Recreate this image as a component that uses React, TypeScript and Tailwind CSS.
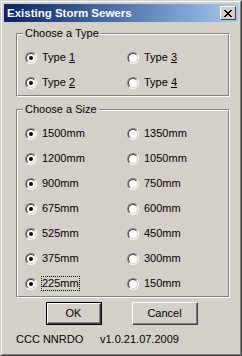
import React from "react";

const FONT = "font-['Liberation_Sans',Arial,sans-serif]";

function Radio({ checked }: { checked: boolean }) {
    return (
        <span className="flex h-[12px] w-[12px] shrink-0 rounded-full border border-t-[#808080] border-l-[#808080] border-r-white border-b-white">
            <span className="flex flex-1 items-center justify-center rounded-full border border-t-[#404040] border-l-[#404040] border-r-[#d4d0c8] border-b-[#d4d0c8] bg-white">
                {checked && <span className="h-[4px] w-[4px] rounded-full bg-black" />}
            </span>
        </span>
    );
}

function Option({
    checked,
    children,
    focused,
}: {
    checked: boolean;
    children: React.ReactNode;
    focused?: boolean;
}) {
    return (
        <div className="flex h-[25px] items-center">
            <Radio checked={checked} />
            <span
                className={
                    focused
                        ? "ml-[4px] border border-dotted border-black px-0 leading-[13px]"
                        : "ml-[5px] leading-[13px]"
                }
            >
                {children}
            </span>
        </div>
    );
}

function GroupBox({
    title,
    children,
    className,
}: {
    title: string;
    children: React.ReactNode;
    className?: string;
}) {
    return (
        <div
            className={`relative w-[214px] border border-t-[#808080] border-l-[#808080] border-r-white border-b-white ${className ?? ""}`}
        >
            <span className="absolute left-[6px] top-[-7px] bg-[#d4d0c8] px-[2px] leading-[13px]">
                {title}
            </span>
            <div className="border border-t-white border-l-white border-r-[#808080] border-b-[#808080] pl-[7px] pt-[10px]">
                <div className="grid grid-cols-[102px_1fr]">{children}</div>
            </div>
        </div>
    );
}

const sizes: [string, string][] = [
    ["1500mm", "1350mm"],
    ["1200mm", "1050mm"],
    ["900mm", "750mm"],
    ["675mm", "600mm"],
    ["525mm", "450mm"],
    ["375mm", "300mm"],
    ["225mm", "150mm"],
];

export default function App() {
    return (
        <div
            className={`h-[356px] w-[242px] border border-t-[#d4d0c8] border-l-[#d4d0c8] border-r-[#404040] border-b-[#404040] bg-[#d4d0c8] text-[11px] text-black ${FONT}`}
        >
            <div className="h-full border border-t-white border-l-white border-r-[#808080] border-b-[#808080] p-[2px]">
                {/* Title bar */}
                <div className="flex h-[18px] items-center bg-gradient-to-r from-[#0a246a] to-[#a6caf0] pl-[3px] pr-[2px]">
                    <span className="flex-1 text-[11.5px] font-bold leading-[14px] text-white">
                        Existing Storm Sewers
                    </span>
                    <button className="flex h-[14px] w-[16px] items-center justify-center border border-t-white border-l-white border-r-[#404040] border-b-[#404040] bg-[#d4d0c8]">
                        <svg width="8" height="7" viewBox="0 0 8 7" shapeRendering="crispEdges">
                            <path
                                d="M0 0h2v1H0zM6 0h2v1H6zM1 1h2v1H1zM5 1h2v1H5zM2 2h4v1H2zM3 3h2v1H3zM2 4h4v1H2zM1 5h2v1H1zM5 5h2v1H5zM0 6h2v1H0zM6 6h2v1H6z"
                                fill="black"
                            />
                        </svg>
                    </button>
                </div>

                <div className="pl-[12px]">
                    <GroupBox title="Choose a Type" className="mt-[11px]">
                        <Option checked>
                            Type <u>1</u>
                        </Option>
                        <Option checked={false}>
                            Type <u>3</u>
                        </Option>
                        <Option checked>
                            Type <u>2</u>
                        </Option>
                        <Option checked={false}>
                            Type <u>4</u>
                        </Option>
                    </GroupBox>

                    <GroupBox title="Choose a Size" className="mt-[12px]">
                        {sizes.map(([a, b]) => (
                            <React.Fragment key={a}>
                                <Option checked focused={a === "225mm"}>
                                    {a}
                                </Option>
                                <Option checked={false}>{b}</Option>
                            </React.Fragment>
                        ))}
                    </GroupBox>

                    {/* Buttons */}
                    <div className="mt-[4px] flex gap-[30px] pl-[30px]">
                        <button className="h-[23px] w-[56px] border border-black">
                            <span className="flex h-full items-center justify-center border border-t-white border-l-white border-r-[#404040] border-b-[#404040]">
                                <span className="flex h-full w-full items-center justify-center border-r border-b border-[#808080]">
                                    OK
                                </span>
                            </span>
                        </button>
                        <button className="h-[23px] w-[66px] border border-t-white border-l-white border-r-[#404040] border-b-[#404040]">
                            <span className="flex h-full w-full items-center justify-center border-r border-b border-[#808080]">
                                Cancel
                            </span>
                        </button>
                    </div>

                    {/* Footer */}
                    <div className="mt-[8px] flex leading-[13px]">
                        <span className="w-[84px]">CCC NNRDO</span>
                        <span>v1.0.21.07.2009</span>
                    </div>
                </div>
            </div>
        </div>
    );
}
